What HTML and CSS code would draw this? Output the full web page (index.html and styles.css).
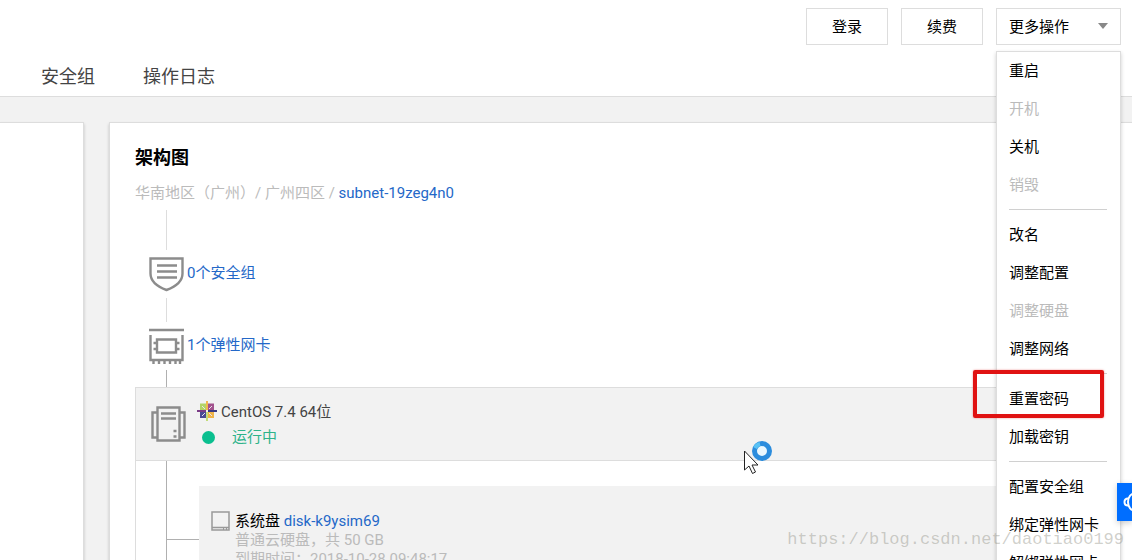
FILE: index.html
```html
<!DOCTYPE html>
<html lang="zh-CN">
<head>
    <meta charset="UTF-8">
    <meta name="viewport" content="width=device-width, initial-scale=1.0">
    <title>云服务器 - 架构图</title>
    <link rel="stylesheet" href="styles.css">
</head>
<body>
    <header class="header">
        <div class="actions">
            <button type="button" class="btn">登录</button>
            <button type="button" class="btn">续费</button>
            <div class="dropdown">
                <button type="button" class="btn btn-more" aria-haspopup="true" aria-expanded="true" aria-controls="moreMenu">
                    更多操作
                    <svg class="caret" viewBox="0 0 10 6"><path d="M0 0h10L5 6z"></path></svg>
                </button>
                <ul id="moreMenu" class="menu">
                    <li><button type="button">重启</button></li>
                    <li><button type="button" disabled>开机</button></li>
                    <li><button type="button">关机</button></li>
                    <li><button type="button" disabled>销毁</button></li>
                    <li class="divider"></li>
                    <li><button type="button">改名</button></li>
                    <li><button type="button">调整配置</button></li>
                    <li><button type="button" disabled>调整硬盘</button></li>
                    <li><button type="button">调整网络</button></li>
                    <li class="divider"></li>
                    <li class="marked"><button type="button">重置密码</button></li>
                    <li><button type="button">加载密钥</button></li>
                    <li class="divider"></li>
                    <li><button type="button">配置安全组</button></li>
                    <li><button type="button">绑定弹性网卡</button></li>
                    <li><button type="button">解绑弹性网卡</button></li>
                </ul>
            </div>
        </div>
        <nav class="tabs">
            <a href="#security">安全组</a>
            <a href="#logs">操作日志</a>
        </nav>
    </header>

    <main class="main-content">
        <section class="card side-card"></section>
        <section class="card arch-card">
            <h2 class="card-title">架构图</h2>
            <p class="crumbs">华南地区（广州）/ 广州四区 / <a href="#subnet">subnet-19zeg4n0</a></p>

            <div class="line line-top"></div>
            <div class="node">
                <svg class="icon" viewBox="0 0 36 36">
                    <path d="M1.500 2.500h32v15c0 8-6.500 13-16 16.500C8 30.500 1.500 25.500 1.500 17.500z"></path>
                    <path d="M8 9.500h20M8 15.500h20M8 21.500h20"></path>
                </svg>
                <a href="#security">0个安全组</a>
            </div>
            <div class="line line-mid"></div>
            <div class="node">
                <svg class="icon" viewBox="0 0 36 36">
                    <path d="M0 2h35M1.500 7v25h32V7"></path>
                    <path d="M8 11.500h19v13H8zM4.500 15h3M4.500 21h3M27.500 15h3M27.500 21h3"></path>
                    <path d="M4.500 32v4M10 32v4M15.500 32v4M21 32v4M26.500 32v4M31 32v4"></path>
                </svg>
                <a href="#eni">1个弹性网卡</a>
            </div>
            <div class="line line-low"></div>

            <div class="server">
                <svg class="icon" viewBox="0 0 36 36">
                    <path d="M6.500 1.500h22v33h-22zM6.500 6.500h-5v25h5M28.500 6.500h5v25h-5"></path>
                    <path d="M10 7.500h15M10 12.500h15M22.500 25h3M22.500 30.500h3"></path>
                </svg>
                <div class="server-info">
                    <div class="os">
                        <svg class="centos" viewBox="0 0 20 20">
                            <path fill="#b3d465" d="M3 2.500h6V9H3z"></path>
                            <path fill="#a2528d" d="M11 2.500h6V9h-6z"></path>
                            <path fill="#4a4a94" d="M3 11h6v6H3z"></path>
                            <path fill="#efb348" d="M11 11h6v6h-6z"></path>
                            <path stroke="#f2b84e" stroke-width="2" d="M10 0v9"></path>
                            <path stroke="#c3dc7a" stroke-width="2" d="M10 11v9"></path>
                            <path stroke="#7a3b86" stroke-width="2" d="M0 10h9"></path>
                            <path stroke="#3a3a82" stroke-width="2" d="M11 10h9"></path>
                            <path stroke="#e9e2ee" d="M5 5l3 3M15 5l-3 3M5 15l3-3M15 15l-3-3"></path>
                        </svg>
                        CentOS 7.4 64位
                    </div>
                    <div class="status"><span class="dot"></span>运行中</div>
                </div>
            </div>

            <div class="storage">
                <div class="branch">
                    <div class="connector"></div>
                    <div class="disk">
                        <svg class="disk-icon" viewBox="0 0 19 20">
                            <path d="M1 1h17v18H1zM1 16.500h17M12 18h1M15 18h1"></path>
                        </svg>
                        <div>
                            <div>系统盘 <a href="#disk">disk-k9ysim69</a></div>
                            <div class="muted">普通云硬盘，共 50 GB</div>
                            <div class="muted">到期时间：2018-10-28 09:48:17</div>
                        </div>
                    </div>
                </div>
            </div>
        </section>
    </main>

    <button type="button" class="support" aria-label="在线客服">
        <svg viewBox="0 0 24 24">
            <path d="M13 3C8 3 5 7 5 12s3 9 8 9"></path>
            <path d="M5 8.500C3 8.500 1.500 10 1.500 12S3 15.500 5 15.500"></path>
        </svg>
    </button>

    <svg class="cursor" viewBox="0 0 30 34">
        <circle cx="19" cy="11" r="7.500" fill="#eaf7fe" stroke="#2b8cdd" stroke-width="5"></circle>
        <path d="M12 8a7.500 7.500 0 0 1 5-4" fill="none" stroke="#5ac3f5" stroke-width="4"></path>
        <path d="M1.500 11v19l4.500-4 3.500 7.500 3-1.500-3.500-7h6z" fill="#fff" stroke="#222"></path>
    </svg>

    <div class="watermark">https://blog.csdn.net/daotiao0199</div>
</body>
</html>
```
FILE: styles.css
```css
* {
    margin: 0;
    padding: 0;
    box-sizing: border-box;
}

body {
    position: relative;
    height: 100vh;
    overflow: hidden;
    background: #f2f2f2;
    color: #000;
    font-family: Roboto, "Noto Sans CJK SC", sans-serif;
    font-size: 15px;
    display: flex;
    flex-direction: column;
}

button {
    font: inherit;
    color: inherit;
    border: none;
    background: none;
    cursor: pointer;
}

a {
    color: #2468c8;
    text-decoration: none;
}

/* Header */
.header {
    flex: none;
    background: #fff;
    border-bottom: 1px solid #ddd;
}

.actions {
    display: flex;
    justify-content: flex-end;
    gap: 13px;
    padding: 8px 11px 0;
}

.btn {
    width: 82px;
    height: 37px;
    padding-bottom: 2px;
    background: #fff;
    border: 1px solid #ddd;
}

.btn-more {
    width: 125px;
    padding: 0 12px 2px;
    display: flex;
    align-items: center;
    justify-content: space-between;
}

.caret {
    width: 10px;
    height: 6px;
    fill: #888;
}

.tabs {
    display: flex;
    gap: 48px;
    padding: 16px 41px 0;
    height: 51px;
    font-size: 18px;
    line-height: 32px;
}

.tabs a {
    color: #444;
}

/* Dropdown menu */
.dropdown {
    position: relative;
}

.menu {
    position: absolute;
    top: 43px;
    left: 0;
    z-index: 2;
    width: 125px;
    padding: 0 12px;
    list-style: none;
    background: #fff;
    border: 1px solid #ddd;
    box-shadow: 0 2px 4px rgba(0, 0, 0, 0.2);
}

.menu button {
    display: block;
    width: 100%;
    height: 38px;
    line-height: 34px;
    text-align: left;
    white-space: nowrap;
}

.menu button:disabled {
    color: #bbb;
    cursor: default;
}

.divider {
    height: 1px;
    margin: 5px 1px 6px 0;
    background: #d0d0d0;
}

.marked {
    position: relative;
}

.marked::after {
    content: "";
    position: absolute;
    top: -10px;
    right: 4px;
    bottom: 0;
    left: -36px;
    border: 4px solid #e01212;
    border-radius: 2px;
    box-shadow: 0 0 2px rgba(224, 18, 18, 0.5);
    pointer-events: none;
}

/* Cards */
.main-content {
    flex: none;
    display: flex;
    gap: 25px;
    padding-top: 25px;
}

.card {
    background: #fff;
    border: 1px solid #ddd;
    box-shadow: 0 2px 3px rgba(0, 0, 0, 0.2);
}

.side-card {
    flex: 0 0 84px;
    border-left: none;
}

.arch-card {
    flex: 1;
    margin-right: -2px;
    padding: 22px 25px;
}

.card-title {
    font-size: 18px;
    line-height: 25px;
}

.crumbs {
    margin-top: 11px;
    line-height: 24px;
    color: #bbb;
}

.line {
    width: 1px;
    margin-left: 31px;
    background: #ddd;
}

.line-top {
    height: 40px;
    margin-top: 5px;
}

.line-mid {
    height: 24px;
}

.line-low {
    height: 17px;
    background: #b0b0b0;
}

.node {
    display: flex;
    align-items: center;
    gap: 2px;
    height: 48px;
    padding-left: 14px;
}

.node a {
    padding-bottom: 5px;
}

.icon {
    width: 36px;
    height: 36px;
    fill: none;
    stroke: #8c8c8c;
    stroke-width: 2.4;
}

.server {
    display: flex;
    align-items: center;
    gap: 10px;
    height: 74px;
    padding-left: 15px;
    background: #f2f2f2;
    border: 1px solid #ddd;
}

.server-info {
    padding-top: 2px;
    line-height: 25px;
    color: #444;
}

.os {
    display: flex;
    align-items: center;
    gap: 4px;
}

.centos {
    width: 20px;
    height: 20px;
    margin-bottom: 4px;
}

.status {
    display: flex;
    align-items: center;
    gap: 17px;
    padding-left: 5px;
    color: #2eb38a;
}

.dot {
    width: 13px;
    height: 13px;
    border-radius: 50%;
    background: #0abf8f;
}

.storage {
    border-left: 1px solid #ddd;
    border-right: 1px solid #ddd;
}

.branch {
    display: flex;
    margin-left: 30px;
    border-left: 1px solid #b0b0b0;
}

.connector {
    width: 32px;
    height: 1px;
    margin-top: 78px;
    background: #b0b0b0;
}

.disk {
    flex: 1;
    display: flex;
    gap: 5px;
    margin: 25px 25px 25px 0;
    padding: 25px 12px;
    background: #f2f2f2;
    line-height: 20px;
}

.disk-icon {
    width: 19px;
    height: 20px;
    fill: none;
    stroke: #999;
    stroke-width: 1.5;
}

.muted {
    line-height: 19px;
    color: #bbb;
}

/* Things floating over the page */
.support {
    position: absolute;
    top: 483px;
    right: 0;
    z-index: 3;
    width: 15px;
    height: 38px;
    padding-left: 6px;
    overflow: hidden;
    background: #006eff;
    box-shadow: 0 2px 6px rgba(0, 0, 0, 0.2);
}

.support svg {
    display: block;
    width: 24px;
    height: 24px;
    fill: none;
    stroke: #fff;
    stroke-width: 2;
}

.cursor {
    position: absolute;
    top: 440px;
    left: 743px;
    width: 30px;
    height: 34px;
}

.watermark {
    position: absolute;
    right: 8px;
    bottom: 8px;
    z-index: 4;
    font-family: "Liberation Mono", monospace;
    font-size: 17px;
    line-height: 24px;
    color: rgba(150, 150, 140, 0.45);
    pointer-events: none;
}
```
